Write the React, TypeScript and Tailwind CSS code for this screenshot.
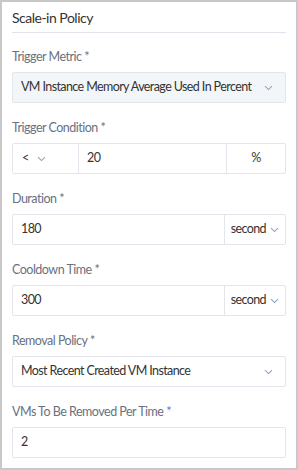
import React from "react";

const font = { fontFamily: 'Lato, "Noto Sans", sans-serif' };

function Chevron() {
  return (
    <svg width="9" height="6" viewBox="0 0 9 6" className="shrink-0">
      <path d="M1 1.2 L4.5 4.6 L8 1.2" fill="none" stroke="#8ea2c4" strokeWidth="1.1" />
    </svg>
  );
}

function Label({ text, blueStar }: { text: string; blueStar?: boolean }) {
  return (
    <div className="h-5 leading-5 text-[12.5px] tracking-[-0.5px] text-[#67717f]">
      {text} <span className={blueStar ? "text-[#3d7fd9]" : ""}>*</span>
    </div>
  );
}

function Field({ label, blueStar, children }: { label: string; blueStar?: boolean; children: React.ReactNode }) {
  return (
    <div className="flex flex-col gap-[5px] mb-[15px]">
      <Label text={label} blueStar={blueStar} />
      {children}
    </div>
  );
}

function Box({ children, muted }: { children: React.ReactNode; muted?: boolean }) {
  return (
    <div
      className={`h-[31px] flex items-stretch border border-[#e2e6ec] rounded-[2px] text-[12.5px] tracking-[-0.6px] text-[#333] whitespace-nowrap ${
        muted ? "bg-[#f3f6f9]" : "bg-white"
      }`}
    >
      {children}
    </div>
  );
}

function UnitInput({ value, unit }: { value: string; unit: string }) {
  return (
    <Box>
      <div className="flex-1 flex items-center pl-[8px]">{value}</div>
      <div className="w-[61px] border-l border-[#e2e6ec] flex items-center justify-end gap-[4px] pr-[6px]">
        <span>{unit}</span>
        <Chevron />
      </div>
    </Box>
  );
}

export default function App() {
  return (
    <div style={font} className="w-[298px] h-[470px] border-2 border-[#c8c8c8] bg-white px-[10px]">
      <div className="pt-[6px] pb-[4px] border-b border-[#dfe4ea] text-[14px] tracking-[-0.5px] leading-5 text-[#333] mb-[14px]">
        Scale-in Policy
      </div>

      <Field label="Trigger Metric">
        <Box muted>
          <div className="flex-1 flex items-center justify-between pl-[8px] pr-[12px]">
            <span>VM Instance Memory Average Used In Percent</span>
            <Chevron />
          </div>
        </Box>
      </Field>

      <Field label="Trigger Condition">
        <Box>
          <div className="w-[66px] flex items-center gap-[8px] pl-[9px] border-r border-[#e2e6ec]">
            <span>&lt;</span>
            <Chevron />
          </div>
          <div className="flex-1 flex items-center pl-[8px]">20</div>
          <div className="w-[59px] border-l border-[#e2e6ec] flex items-center justify-center">%</div>
        </Box>
      </Field>

      <Field label="Duration">
        <UnitInput value="180" unit="second" />
      </Field>

      <Field label="Cooldown Time">
        <UnitInput value="300" unit="second" />
      </Field>

      <Field label="Removal Policy">
        <Box>
          <div className="flex-1 flex items-center justify-between pl-[8px] pr-[12px]">
            <span>Most Recent Created VM Instance</span>
            <Chevron />
          </div>
        </Box>
      </Field>

      <Field label="VMs To Be Removed Per Time" blueStar>
        <Box>
          <div className="flex-1 flex items-center pl-[8px]">2</div>
        </Box>
      </Field>
    </div>
  );
}
